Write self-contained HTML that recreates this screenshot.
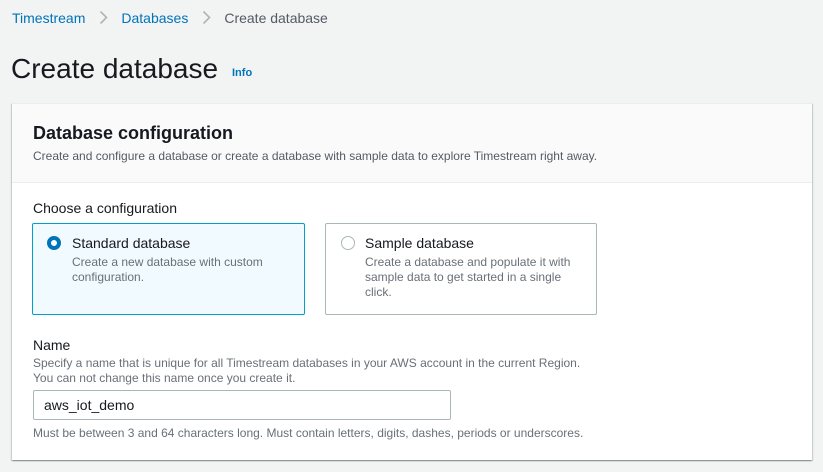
<!DOCTYPE html>
<html><head><style>
*{box-sizing:border-box;margin:0;padding:0}
body{width:823px;height:472px;background:#f2f3f3;font-family:"Liberation Sans",sans-serif;color:#16191f;position:relative;overflow:hidden}
.a{position:absolute;white-space:nowrap}
.bc{top:9px;left:12px;font-size:14px;line-height:18px;color:#545b64}
.bc a{color:#0073bb;text-decoration:none}
.chev{display:inline-block;margin:0 13px 0 14px;width:9px;height:13px;vertical-align:-1px}
.card{position:absolute;left:12px;top:103px;width:800px;height:357px;background:#fff;box-shadow:0 1px 1px 0 rgba(0,28,36,.3),1px 1px 1px 0 rgba(0,28,36,.15),-1px 1px 1px 0 rgba(0,28,36,.15);border-top:1px solid #eaeded}
.hd{position:absolute;left:0;top:0;width:100%;height:79px;background:#fafafa;border-bottom:1px solid #eaeded}
.tile{position:absolute;top:223px;height:92px;border:1px solid #aab7b8;border-radius:2px;background:#fff}
.tile.sel{border-color:#00a1c9;background:#f1faff}
.t1{font-size:14px;color:#16191f}
.t2{font-size:12px;color:#687078;line-height:15px}
</style></head><body>
<div class="a bc"><a>Timestream</a><svg class="chev" viewBox="0 0 9 13"><path d="M1.5 0.5l6 6-6 6" fill="none" stroke="#aab7b8" stroke-width="1.6"/></svg><a>Databases</a><svg class="chev" viewBox="0 0 9 13"><path d="M1.5 0.5l6 6-6 6" fill="none" stroke="#aab7b8" stroke-width="1.6"/></svg>Create database</div>
<div class="a" style="left:11px;top:51px;font-size:28px;line-height:36px;color:#16191f">Create database</div>
<div class="a" style="left:232px;top:67px;font-size:11px;font-weight:bold;color:#0073bb">Info</div>
<div class="card"><div class="hd"></div></div>
<div class="a" style="left:33px;top:122px;font-size:18px;font-weight:bold;line-height:22px">Database configuration</div>
<div class="a t2" style="left:33px;top:149px;color:#545b64">Create and configure a database or create a database with sample data to explore Timestream right away.</div>
<div class="a t1" style="left:33px;top:200px">Choose a configuration</div>
<div class="tile sel" style="left:32px;width:273px"></div>
<div class="tile" style="left:325px;width:272px"></div>
<div class="a" style="left:47px;top:236px;width:14px;height:14px;border-radius:50%;border:4px solid #0073bb;background:#fff"></div>
<div class="a" style="left:341px;top:236px;width:14px;height:14px;border-radius:50%;border:1px solid #aab7b8;background:#fff"></div>
<div class="a t1" style="left:72px;top:235px">Standard database</div>
<div class="a t2" style="left:72px;top:255px;white-space:normal;width:230px">Create a new database with custom<br>configuration.</div>
<div class="a t1" style="left:365px;top:235px">Sample database</div>
<div class="a t2" style="left:365px;top:255px;white-space:normal;width:230px">Create a database and populate it with<br>sample data to get started in a single<br>click.</div>
<div class="a t1" style="left:33px;top:337px">Name</div>
<div class="a t2" style="left:33px;top:356px">Specify a name that is unique for all Timestream databases in your AWS account in the current Region.<br>You can not change this name once you create it.</div>
<div class="a" style="left:33px;top:390px;width:418px;height:30px;border:1px solid #aab7b8;border-radius:2px;background:#fff;font-size:14px;line-height:28px;padding-left:10px">aws_iot_demo</div>
<div class="a t2" style="left:33px;top:426px">Must be between 3 and 64 characters long. Must contain letters, digits, dashes, periods or underscores.</div>
</body></html>
